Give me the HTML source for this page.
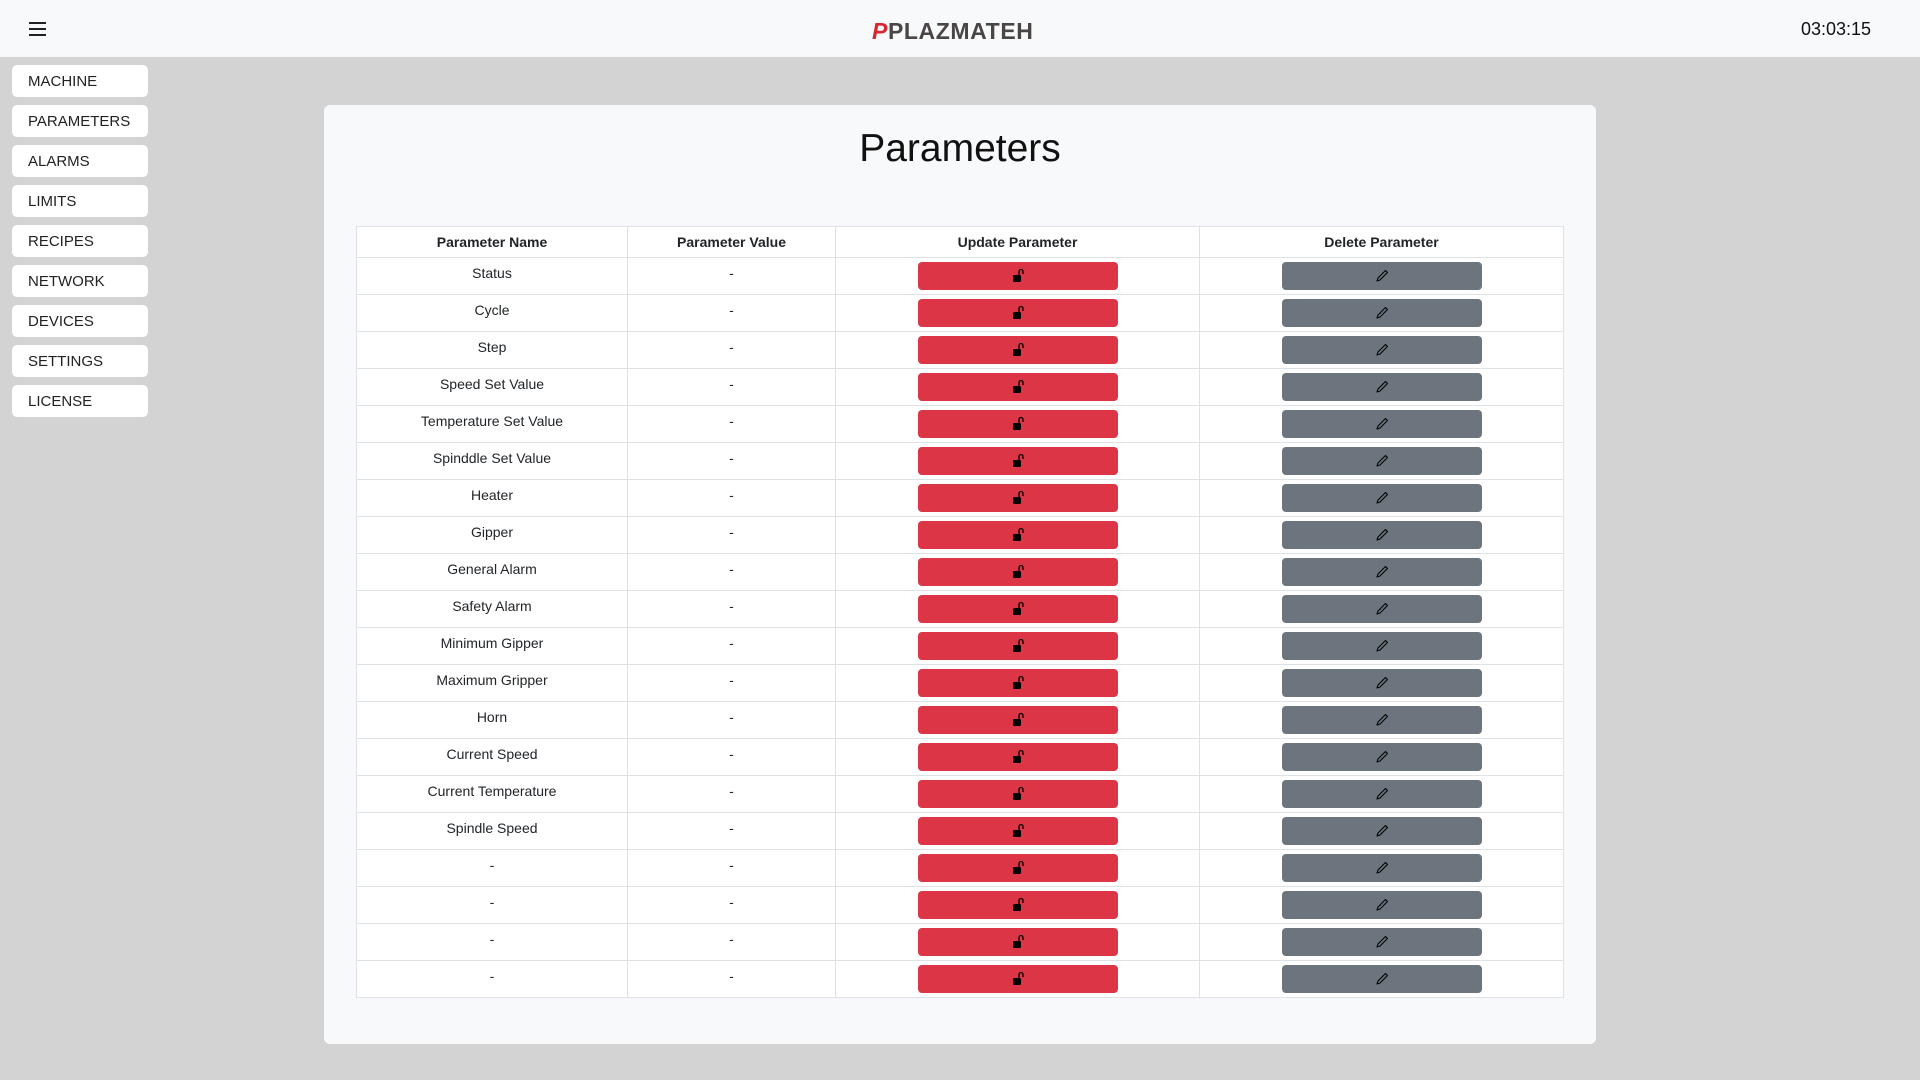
<!DOCTYPE html>
<html><head><meta charset="utf-8"><style>
*{box-sizing:border-box;margin:0;padding:0}
body{width:1920px;height:1080px;background:#d3d3d3;font-family:"Liberation Sans",sans-serif;color:#212529;position:relative;overflow:hidden}
.hdr{position:absolute;left:0;top:0;width:1920px;height:57px;background:#f8f9fa}
.ham{position:absolute;left:29px;top:22px;width:17px}
.ham div{height:2px;background:#222;margin-bottom:4px}
.logo{position:absolute;left:872px;top:18px;font-weight:bold;font-size:23px;color:#4a4646;letter-spacing:0.6px}
.logo span{color:#d6282e;font-style:italic}
.time{position:absolute;left:1801px;top:19px;font-size:18px;color:#111;font-weight:500}
.nav{position:absolute;left:12px;width:136px;height:32px;background:#fff;border-radius:5px;font-size:15px;line-height:33px;padding-left:16px;color:#222}
.card{position:absolute;left:324px;top:105px;width:1272px;height:939px;background:#f8f9fa;border-radius:6px}
h1{position:absolute;left:0;width:100%;top:127px;text-align:center;font-weight:normal;font-size:39px;color:#111}
table{position:absolute;left:356px;top:226px;border-collapse:collapse;background:#fff;font-size:14px}
td,th{border:1px solid #dee2e6;text-align:center;vertical-align:top}
th{height:31px;font-weight:bold;line-height:30px;font-size:14px}
td{height:37px;line-height:20px;padding-top:5px}
td.b{padding-top:4px}
.btn{width:200px;height:28px;border-radius:4px;margin:0 auto;display:flex;align-items:center;justify-content:center}
.r{background:#dc3545}.g{background:#6c757d}
</style></head><body>
<div class="hdr">
<div class="ham"><div></div><div></div><div></div></div>
<div class="logo"><span>P</span>PLAZMATEH</div>
<div class="time">03:03:15</div>
</div>
<div class="nav" style="top:65px">MACHINE</div>
<div class="nav" style="top:105px">PARAMETERS</div>
<div class="nav" style="top:145px">ALARMS</div>
<div class="nav" style="top:185px">LIMITS</div>
<div class="nav" style="top:225px">RECIPES</div>
<div class="nav" style="top:265px">NETWORK</div>
<div class="nav" style="top:305px">DEVICES</div>
<div class="nav" style="top:345px">SETTINGS</div>
<div class="nav" style="top:385px">LICENSE</div>
<div class="card"></div>
<h1>Parameters</h1>
<table>
<tr><th style="width:271px">Parameter Name</th><th style="width:208px">Parameter Value</th><th style="width:364px">Update Parameter</th><th style="width:364px">Delete Parameter</th></tr>
</table>
<script>
var n=["Status","Cycle","Step","Speed Set Value","Temperature Set Value","Spinddle Set Value","Heater","Gipper","General Alarm","Safety Alarm","Minimum Gipper","Maximum Gripper","Horn","Current Speed","Current Temperature","Spindle Speed","-","-","-","-"];
var lock='<svg width="14" height="16" viewBox="0 0 14 16"><path d="M8 7V3.5a2 2 0 0 1 4 0V6" fill="none" stroke="#000" stroke-width="1.3"/><rect x="2" y="7" width="8" height="7" rx="1.5" fill="#000"/></svg>';
var pen='<svg width="16" height="16" viewBox="0 0 16 16"><path d="M11.5 2.5l2 2L6 12l-3 1 1-3z" fill="none" stroke="#000" stroke-width="1.1" stroke-linejoin="round"/></svg>';
var h='';n.forEach(function(x){h+='<tr><td>'+x+'</td><td>-</td><td class="b"><div class="btn r">'+lock+'</div></td><td class="b"><div class="btn g">'+pen+'</div></td></tr>';});
document.querySelector('table tbody').insertAdjacentHTML('beforeend',h);
</script>
</body></html>
